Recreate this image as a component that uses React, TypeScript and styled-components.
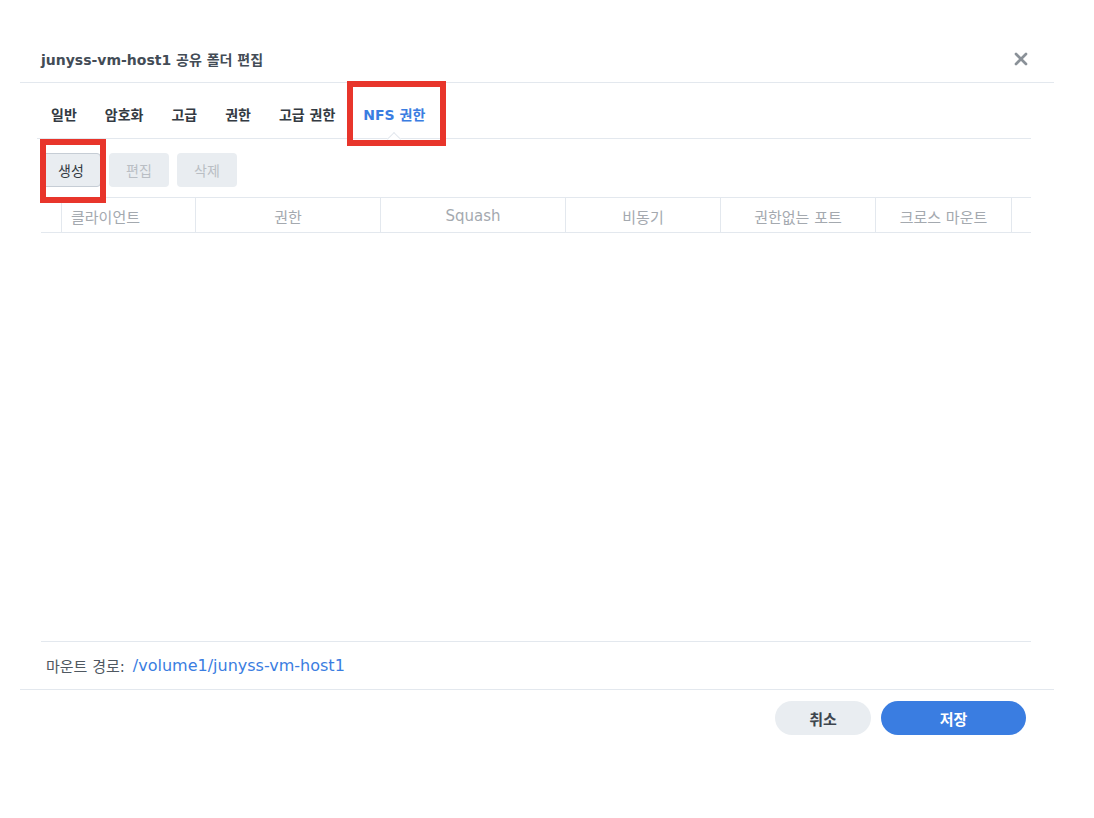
import styled, { createGlobalStyle } from 'styled-components';
import { X } from 'lucide-react';

const line = '#e3e8ee';
const blue = '#3a7de1';
const red = '#e8352b';

const GlobalStyle = createGlobalStyle`
  body {
    margin: 0;
    background: #fff;
    font-family: "DejaVu Sans", "Noto Sans CJK KR", sans-serif;
    color: #333a42;
  }
`;

const Page = styled.div`
  padding: 36px 0 0 20px;
`;

const Dialog = styled.div`
  width: 1034px;
  display: flex;
  flex-direction: column;
`;

const Header = styled.header`
  height: 46px;
  display: flex;
  align-items: center;
  justify-content: space-between;
  padding: 0 23px 0 21px;
  border-bottom: 1px solid ${line};
`;

const Title = styled.h1`
  margin: 0;
  font-size: 14px;
  font-weight: 700;
  color: #434c56;
`;

const Close = styled.button`
  display: flex;
  padding: 0;
  border: 0;
  background: none;
  color: #8a9198;
`;

const Body = styled.div`
  padding: 0 23px 0 21px;
  display: flex;
  flex-direction: column;
  height: 606px;
`;

const Tabs = styled.nav`
  height: 55px;
  display: flex;
  margin-left: -4px;
  border-bottom: 1px solid ${line};
`;

const Tab = styled.div<{ $active?: boolean }>`
  position: relative;
  display: flex;
  align-items: flex-end;
  padding: 0 14px 14px;
  line-height: 18px;
  font-size: 14px;
  font-weight: 700;
  white-space: nowrap;
  color: ${(p) => (p.$active ? blue : '#333a42')};
`;

const Notch = styled.span`
  position: absolute;
  left: 50%;
  bottom: -6px;
  width: 9px;
  height: 9px;
  margin-left: -5px;
  background: #fff;
  border-top: 1px solid ${line};
  border-left: 1px solid ${line};
  transform: rotate(45deg);
`;

const Mark = styled.span<{ $t: number; $r: number; $b: number; $l: number }>`
  position: absolute;
  top: ${(p) => p.$t}px;
  right: ${(p) => p.$r}px;
  bottom: ${(p) => p.$b}px;
  left: ${(p) => p.$l}px;
  border: 6px solid ${red};
  pointer-events: none;
  z-index: 2;
`;

const Toolbar = styled.div`
  display: flex;
  gap: 8px;
  padding: 14px 0 10px;
`;

const ToolButton = styled.button<{ $focus?: boolean }>`
  position: relative;
  width: 60px;
  height: 34px;
  border-radius: 4px;
  border: 1px solid ${(p) => (p.$focus ? '#c6cdd5' : 'transparent')};
  background: #e9edf1;
  font-family: inherit;
  font-size: 14px;
  color: ${(p) => (p.$focus ? '#333a42' : '#b9bec4')};
  padding: 0;
`;

const Grid = styled.div`
  display: grid;
  grid-template-columns: 20px 134px 185px 185px 155px 155px 136px 20px;
  height: 34px;
  border-top: 1px solid ${line};
  border-bottom: 1px solid ${line};
`;

const HeadCell = styled.div<{ $left?: boolean }>`
  display: flex;
  align-items: center;
  justify-content: ${(p) => (p.$left ? 'flex-start' : 'center')};
  padding-left: ${(p) => (p.$left ? '9px' : '0')};
  padding-top: 2px;
  border-left: 1px solid ${line};
  font-size: 15px;
  white-space: nowrap;
  color: #a4a9af;

  &:first-child {
    border-left: 0;
  }
`;

const Rows = styled.div`
  flex: 1;
`;

const MountRow = styled.div`
  height: 47px;
  display: flex;
  align-items: center;
  padding-left: 5px;
  border-top: 1px solid ${line};
  font-size: 15px;
  color: #4f5861;
`;

const Path = styled.span`
  margin-left: 8px;
  font-size: 16px;
  color: ${blue};
`;

const Footer = styled.footer`
  display: flex;
  justify-content: flex-end;
  gap: 10px;
  padding: 11px 28px 0 0;
  border-top: 1px solid ${line};
`;

const FooterButton = styled.button<{ $primary?: boolean }>`
  width: ${(p) => (p.$primary ? '145px' : '96px')};
  height: 34px;
  border: 0;
  border-radius: 17px;
  background: ${(p) => (p.$primary ? blue : '#e9edf1')};
  color: ${(p) => (p.$primary ? '#fff' : '#3d454d')};
  font-family: inherit;
  font-size: 15px;
  font-weight: 700;
`;

const tabs = ['일반', '암호화', '고급', '권한', '고급 권한', 'NFS 권한'];
const columns = ['클라이언트', '권한', 'Squash', '비동기', '권한없는 포트', '크로스 마운트'];

export default function App() {
  return (
    <Page>
      <GlobalStyle />
      <Dialog>
        <Header>
          <Title>junyss-vm-host1 공유 폴더 편집</Title>
          <Close aria-label="닫기">
            <X size={20} strokeWidth={3.2} />
          </Close>
        </Header>
        <Body>
          <Tabs>
            {tabs.map((t, i) => {
              const active = i === tabs.length - 1;
              return (
                <Tab key={t} $active={active}>
                  {t}
                  {active && <Notch />}
                  {active && <Mark $t={-2} $r={-7} $b={-8} $l={-2} />}
                </Tab>
              );
            })}
          </Tabs>
          <Toolbar>
            <ToolButton $focus>
              생성
              <Mark $t={-15} $r={-6} $b={-17} $l={-2} />
            </ToolButton>
            <ToolButton disabled>편집</ToolButton>
            <ToolButton disabled>삭제</ToolButton>
          </Toolbar>
          <Grid>
            <HeadCell />
            {columns.map((c, i) => (
              <HeadCell key={c} $left={i === 0}>
                {c}
              </HeadCell>
            ))}
            <HeadCell />
          </Grid>
          <Rows />
          <MountRow>
            마운트 경로:<Path>/volume1/junyss-vm-host1</Path>
          </MountRow>
        </Body>
        <Footer>
          <FooterButton>취소</FooterButton>
          <FooterButton $primary>저장</FooterButton>
        </Footer>
      </Dialog>
    </Page>
  );
}
